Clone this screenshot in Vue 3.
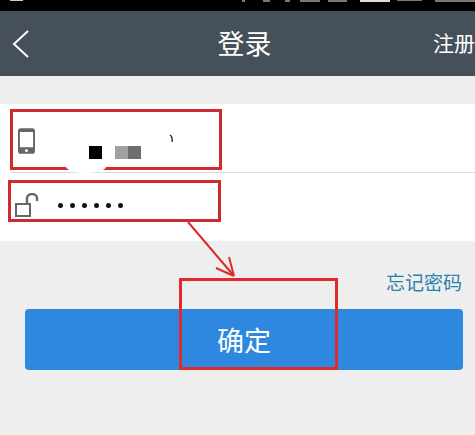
<script setup>
const dots = [0, 1, 2, 3, 4, 5]
</script>

<template>
  <div class="page">
    <div class="status">
      <i class="st-a"></i>
      <div class="st-right"><i class="s1"></i><i class="s2"></i><i class="s3"></i><i class="s4"></i><i class="s5"></i><i class="s6"></i><i class="s7"></i><i class="s8"></i></div>
    </div>
    <header class="bar">
      <svg class="back" width="18" height="30" viewBox="0 0 18 30"><path d="M16 2 L2 15 L16 28" fill="none" stroke="#fff" stroke-width="2"/></svg>
      <h1 class="title">登录</h1>
      <span class="reg">注册</span>
    </header>
    <section class="form">
      <div class="row phone">
        <svg class="ic-phone" width="17" height="26" viewBox="0 0 18 27">
          <path fill-rule="evenodd" d="M3 0h12a3 3 0 0 1 3 3v21a3 3 0 0 1-3 3H3a3 3 0 0 1-3-3V3a3 3 0 0 1 3-3zM2 4v16h14V4z" fill="#666"/>
          <circle cx="9" cy="23.5" r="1.6" fill="#fff"/>
        </svg>
      </div>
      <div class="row pass">
        <svg class="ic-lock" width="24" height="24" viewBox="0 0 24 24">
          <rect x="1" y="11" width="14" height="12" fill="none" stroke="#666" stroke-width="2"/>
          <path d="M12 10V5a5 4 0 0 1 10 0v3" fill="none" stroke="#666" stroke-width="2.4"/>
        </svg>
        <div class="dots"><i v-for="d in dots" :key="d" class="dot"></i></div>
      </div>
    </section>
    <div class="forgot-row"><a class="forgot">忘记密码</a></div>
    <div class="btn-wrap"><button class="submit">确定</button></div>

    <div class="mark m1"></div>
    <div class="mark m2"></div>
    <div class="mark m3"></div>
    <div class="gap"></div>
    <i class="px p1"></i><i class="px p2"></i><i class="px p3"></i>
    <svg class="tick" width="6" height="10" viewBox="0 0 6 10"><path d="M1 1 Q4 3 3 8" fill="none" stroke="#222" stroke-width="1.3"/></svg>
    <svg class="arrow" width="70" height="100" viewBox="0 0 70 100">
      <path d="M6 10 L52 64 M52 64 L47 45 M52 64 L34 56" fill="none" stroke="#e02a2a" stroke-width="2"/>
    </svg>
  </div>
</template>

<style scoped>
.page {
  position: relative;
  width: 475px;
  height: 435px;
  overflow: hidden;
  background: #eeeeee;
  font-family: "Liberation Sans", "Noto Sans CJK SC", sans-serif;
}
.status {
  height: 11px;
  background: #000;
  display: flex;
  justify-content: space-between;
  overflow: hidden;
}
.st-a { display: block; width: 13px; height: 1px; margin-left: 10px; background: #ccc; }
.st-right { display: flex; }
.st-right i { display: block; height: 2px; background: #777; }
.s1 { width: 3px; }
.s2 { width: 7px; margin-left: 18px; }
.s3 { width: 5px; margin-left: 15px; }
.s4 { width: 20px; margin-left: 10px; }
.s5 { width: 19px; margin-left: 8px; }
.s6 { width: 30px; margin-left: 13px; background: #ddd !important; }
.s7 { width: 25px; margin-left: 7px; height: 1px !important; }
.s8 { width: 40px; margin-left: 13px; }
.bar {
  height: 65px;
  background: #46505a;
  display: flex;
  align-items: center;
  justify-content: center;
  position: relative;
  color: #fff;
}
.back { position: absolute; left: 12px; top: 18px; }
.title {
  margin: 4px 0 0;
  font-size: 27px;
  font-weight: 400;
  line-height: 1;
  position: relative;
  left: 7px;
}
.reg {
  position: absolute;
  left: 433px;
  top: 21px;
  font-size: 21px;
  line-height: 1.1;
  white-space: nowrap;
}
.form {
  margin-top: 28px;
  background: #fff;
  height: 137px;
  display: flex;
  flex-direction: column;
}
.row { display: flex; align-items: center; }
.phone {
  height: 69px;
  border-bottom: 1px solid #ddd;
  margin-left: 11px;
  padding: 5px 0 0 7px;
  box-sizing: border-box;
}
.pass { flex: 1; padding: 0 0 4px 15px; }
.dots { display: flex; gap: 7px; margin-left: 19px; }
.dot { display: block; width: 5px; height: 5px; border-radius: 50%; background: #111; }
.forgot-row {
  display: flex;
  justify-content: flex-end;
  padding: 31px 13px 0 0;
  height: 37px;
}
.forgot { color: #2a82b0; font-size: 19px; line-height: 24px; }
.btn-wrap { padding: 0 12px 0 25px; }
.submit {
  display: block;
  width: 100%;
  height: 61px;
  border: 0;
  border-radius: 4px;
  background: #2f88e0;
  color: #fff;
  font: inherit;
  font-size: 27px;
  padding: 0;
}
.mark { position: absolute; box-sizing: border-box; }
.m1 { left: 10px; top: 109px; width: 212px; height: 61px; border: 3px solid #cf2a30; }
.m2 { left: 8px; top: 180px; width: 213px; height: 42px; border: 3px solid #cf2a30; }
.m3 { left: 179px; top: 278px; width: 159px; height: 92px; border: 3px solid #e02a2e; }
.gap { position: absolute; left: 66px; top: 160px; width: 40px; height: 13px; background: #fff; border-radius: 0 0 50% 50%; }
.px { position: absolute; display: block; top: 146px; height: 13px; }
.p1 { left: 89px; width: 13px; background: #000; }
.p2 { left: 115px; width: 13px; background: #a0a0a0; }
.p3 { left: 128px; width: 13px; background: #6e6e6e; }
.tick { position: absolute; left: 169px; top: 134px; }
.arrow { position: absolute; left: 182px; top: 212px; }
</style>
